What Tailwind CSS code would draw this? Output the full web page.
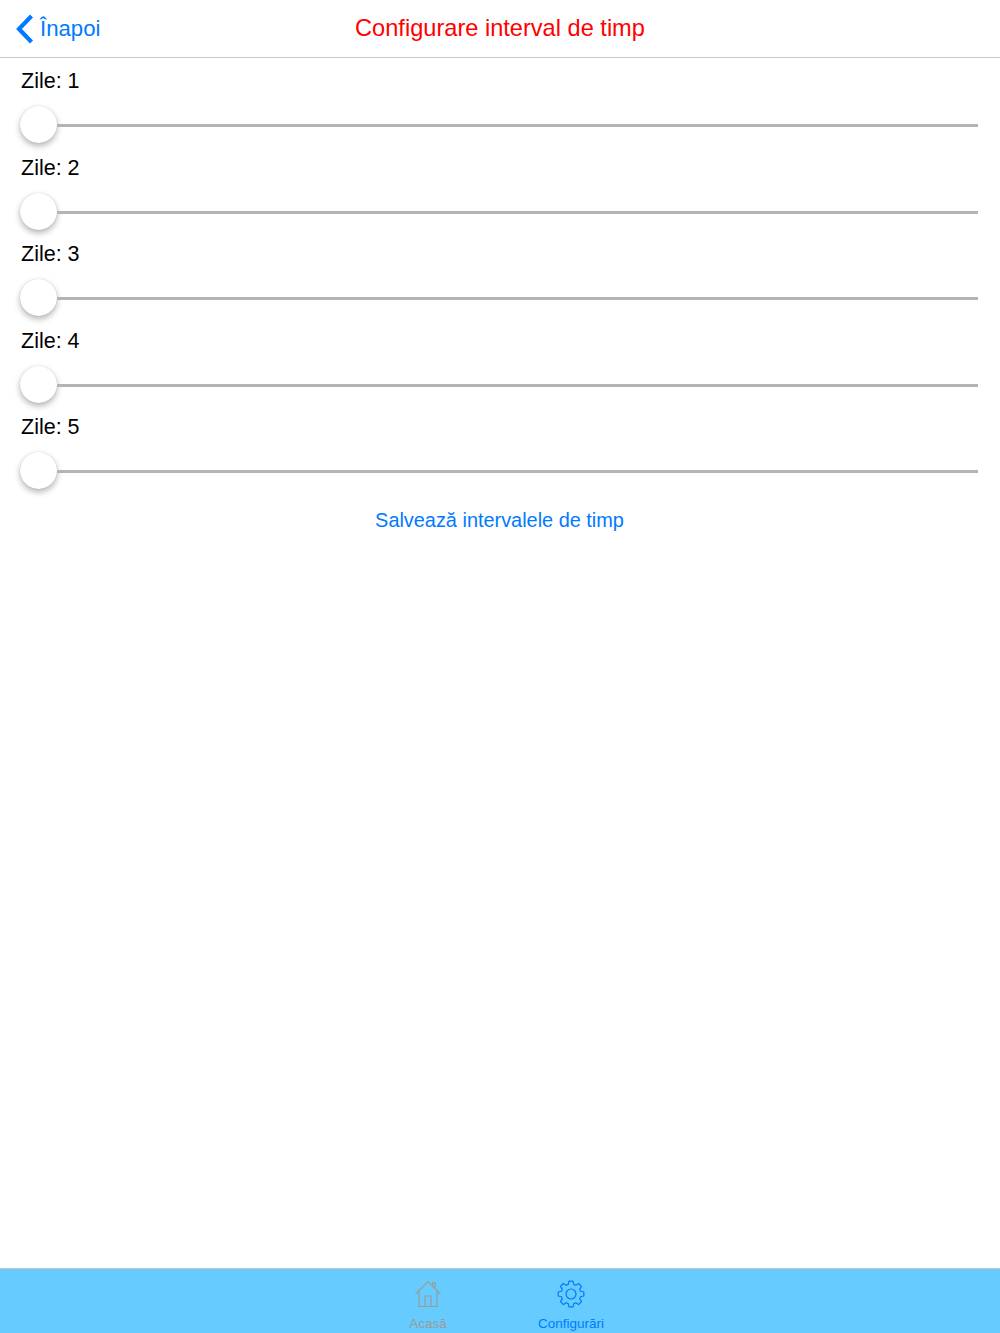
<!DOCTYPE html>
<html lang="ro">
<head>
  <meta charset="UTF-8">
  <title>Configurare interval de timp</title>
  <script src="https://cdn.jsdelivr.net/npm/@tailwindcss/browser@4"></script>
</head>
<body class="bg-white font-['Liberation_Sans',sans-serif]">
  <div class="flex h-[1333px] flex-col overflow-hidden">
    <!-- Header -->
    <header class="relative flex h-[58px] shrink-0 items-center justify-center border-b border-[#c8c8c8] pt-[1px]">
      <a class="absolute top-[14px] left-[16px] flex items-center gap-[6px] text-[22.2px] leading-[30px] text-[#007aff]">
        <svg width="18" height="30" viewBox="0 0 18 30" fill="none" stroke="#007aff" stroke-width="4.2"><path d="M15.5 2 L3 15 L15.5 28"/></svg>
        <span>Înapoi</span>
      </a>
      <h1 class="text-[23.6px] text-[#ff0000]">Configurare interval de timp</h1>
    </header>

    <!-- Sliders -->
    <main class="flex-1">
      <div class="h-[86.5px]">
        <p class="h-[48px] pt-[9px] pl-[21px] text-[21.5px] leading-[28px] text-black">Zile: 1</p>
        <div class="flex items-center pr-[22px] pl-[20px]">
          <span class="size-[37px] shrink-0 rounded-full bg-white shadow-[0_3px_6px_rgba(0,0,0,0.3),0_0_1px_rgba(0,0,0,0.2)]"></span>
          <span class="mt-[2px] h-[3px] flex-1 bg-[#b4b4b4]"></span>
        </div>
      </div>
      <div class="h-[86.5px]">
        <p class="h-[48px] pt-[9px] pl-[21px] text-[21.5px] leading-[28px] text-black">Zile: 2</p>
        <div class="flex items-center pr-[22px] pl-[20px]">
          <span class="size-[37px] shrink-0 rounded-full bg-white shadow-[0_3px_6px_rgba(0,0,0,0.3),0_0_1px_rgba(0,0,0,0.2)]"></span>
          <span class="mt-[2px] h-[3px] flex-1 bg-[#b4b4b4]"></span>
        </div>
      </div>
      <div class="h-[86.5px]">
        <p class="h-[48px] pt-[9px] pl-[21px] text-[21.5px] leading-[28px] text-black">Zile: 3</p>
        <div class="flex items-center pr-[22px] pl-[20px]">
          <span class="size-[37px] shrink-0 rounded-full bg-white shadow-[0_3px_6px_rgba(0,0,0,0.3),0_0_1px_rgba(0,0,0,0.2)]"></span>
          <span class="mt-[2px] h-[3px] flex-1 bg-[#b4b4b4]"></span>
        </div>
      </div>
      <div class="h-[86.5px]">
        <p class="h-[48px] pt-[9px] pl-[21px] text-[21.5px] leading-[28px] text-black">Zile: 4</p>
        <div class="flex items-center pr-[22px] pl-[20px]">
          <span class="size-[37px] shrink-0 rounded-full bg-white shadow-[0_3px_6px_rgba(0,0,0,0.3),0_0_1px_rgba(0,0,0,0.2)]"></span>
          <span class="mt-[2px] h-[3px] flex-1 bg-[#b4b4b4]"></span>
        </div>
      </div>
      <div class="h-[86.5px]">
        <p class="h-[48px] pt-[9px] pl-[21px] text-[21.5px] leading-[28px] text-black">Zile: 5</p>
        <div class="flex items-center pr-[22px] pl-[20px]">
          <span class="size-[37px] shrink-0 rounded-full bg-white shadow-[0_3px_6px_rgba(0,0,0,0.3),0_0_1px_rgba(0,0,0,0.2)]"></span>
          <span class="mt-[2px] h-[3px] flex-1 bg-[#b4b4b4]"></span>
        </div>
      </div>
      <p class="mt-[15px] pr-[1px] text-center text-[19.9px] leading-[28px] text-[#007aff]">Salvează intervalele de timp</p>
    </main>

    <!-- Tab bar -->
    <footer class="flex h-[65px] shrink-0 justify-center border-t border-[#c8c8c8] bg-[#66ccff] pr-[1px]">
      <a class="flex w-[143px] flex-col items-center pt-[11px] text-[#9a9a9a]">
        <svg width="28" height="28" viewBox="0 0 28 28" fill="none" stroke="#9a9a9a" stroke-width="1.2"><path d="M1.5 14 L14 1.5 L26.5 14 M5 11 V26.5 H23 V11 M11 26.5 V16 H17 V26.5 M18.5 5.5 V3 A1.6 1.6 0 0 1 21 5 V8"/></svg>
        <span class="mt-[7px] text-[13.5px] leading-[18px]">Acasă</span>
      </a>
      <a class="flex w-[143px] flex-col items-center pt-[11px] text-[#007aff]">
        <svg width="28" height="28" viewBox="-14 -14 28 28" fill="none" stroke="#007aff" stroke-width="1.2" stroke-linejoin="round"><polygon points="-2.76,-9.61 -2.03,-12.84 2.03,-12.84 2.76,-9.61 4.84,-8.75 7.64,-10.51 10.51,-7.64 8.75,-4.84 9.61,-2.76 12.84,-2.03 12.84,2.03 9.61,2.76 8.75,4.84 10.51,7.64 7.64,10.51 4.84,8.75 2.76,9.61 2.03,12.84 -2.03,12.84 -2.76,9.61 -4.84,8.75 -7.64,10.51 -10.51,7.64 -8.75,4.84 -9.61,2.76 -12.84,2.03 -12.84,-2.03 -9.61,-2.76 -8.75,-4.84 -10.51,-7.64 -7.64,-10.51 -4.84,-8.75"/><circle r="5"/></svg>
        <span class="mt-[7px] text-[13.5px] leading-[18px]">Configurări</span>
      </a>
    </footer>
  </div>
</body>
</html>
